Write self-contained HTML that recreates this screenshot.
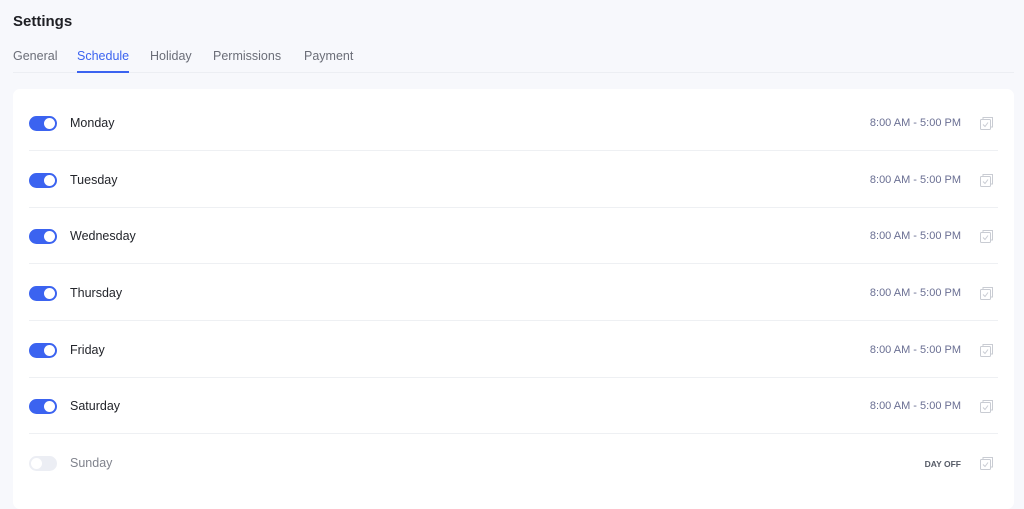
<!DOCTYPE html>
<html><head><style>
*{margin:0;padding:0;box-sizing:border-box}
body{width:1024px;height:483px;overflow:hidden;background:#f7f8fc;font-family:"Liberation Sans",sans-serif;position:relative}
h1{position:absolute;left:13px;top:13px;font-size:15px;font-weight:bold;color:#1e1f24}
.tabs{position:absolute;left:13px;top:49px;right:10px;height:24px;border-bottom:1px solid #eceef3}
.tab{position:absolute;top:0;font-size:12.5px;color:#6b6e78}
.tab.a{color:#3b63f0}
.tab.a:after{content:"";position:absolute;left:0;right:0;top:22px;height:2px;background:#3b63f0}
.card{position:absolute;left:13px;top:89px;width:1001px;height:420px;background:#fff;border-radius:7px}
.row{position:absolute;left:16px;width:969px;height:62px;border-bottom:1px solid #eef0f3}
.tg{position:absolute;left:0;top:27px;width:28px;height:15px;border-radius:8px;background:#3b63f0}
.tg:after{content:"";position:absolute;right:2px;top:2px;width:11px;height:11px;border-radius:50%;background:#fff}
.tg.off{background:#eceef4}.tg.off:after{left:2px;right:auto}
.l{position:absolute;left:41px;top:27px;font-size:12.5px;color:#23252b}
.t{position:absolute;right:37px;top:28px;font-size:11px;color:#6a6f93}
.ic{position:absolute;right:5px;top:28px}
</style></head><body>
<h1>Settings</h1>
<div class="tabs">
<span class="tab" style="left:0">General</span>
<span class="tab a" style="left:64px">Schedule</span>
<span class="tab" style="left:137px">Holiday</span>
<span class="tab" style="left:200px">Permissions</span>
<span class="tab" style="left:291px">Payment</span>
</div>
<div class="card">
<div class="row" style="top:0px"><div class="tg"></div><div class="l">Monday</div><div class="t">8:00 AM - 5:00 PM</div><svg class="ic" width="13" height="13" viewBox="0 0 13 13" fill="none" stroke="#c9ccd3"><rect x="0.5" y="2.5" width="10" height="10" rx="1"/><path d="M3 2.5V0.5h9.5V10h-2"/><path d="M3 7.5l2 2 3-4"/></svg></div>
<div class="row" style="top:57px"><div class="tg"></div><div class="l">Tuesday</div><div class="t">8:00 AM - 5:00 PM</div><svg class="ic" width="13" height="13" viewBox="0 0 13 13" fill="none" stroke="#c9ccd3"><rect x="0.5" y="2.5" width="10" height="10" rx="1"/><path d="M3 2.5V0.5h9.5V10h-2"/><path d="M3 7.5l2 2 3-4"/></svg></div>
<div class="row" style="top:113px"><div class="tg"></div><div class="l">Wednesday</div><div class="t">8:00 AM - 5:00 PM</div><svg class="ic" width="13" height="13" viewBox="0 0 13 13" fill="none" stroke="#c9ccd3"><rect x="0.5" y="2.5" width="10" height="10" rx="1"/><path d="M3 2.5V0.5h9.5V10h-2"/><path d="M3 7.5l2 2 3-4"/></svg></div>
<div class="row" style="top:170px"><div class="tg"></div><div class="l">Thursday</div><div class="t">8:00 AM - 5:00 PM</div><svg class="ic" width="13" height="13" viewBox="0 0 13 13" fill="none" stroke="#c9ccd3"><rect x="0.5" y="2.5" width="10" height="10" rx="1"/><path d="M3 2.5V0.5h9.5V10h-2"/><path d="M3 7.5l2 2 3-4"/></svg></div>
<div class="row" style="top:227px"><div class="tg"></div><div class="l">Friday</div><div class="t">8:00 AM - 5:00 PM</div><svg class="ic" width="13" height="13" viewBox="0 0 13 13" fill="none" stroke="#c9ccd3"><rect x="0.5" y="2.5" width="10" height="10" rx="1"/><path d="M3 2.5V0.5h9.5V10h-2"/><path d="M3 7.5l2 2 3-4"/></svg></div>
<div class="row" style="top:283px"><div class="tg"></div><div class="l">Saturday</div><div class="t">8:00 AM - 5:00 PM</div><svg class="ic" width="13" height="13" viewBox="0 0 13 13" fill="none" stroke="#c9ccd3"><rect x="0.5" y="2.5" width="10" height="10" rx="1"/><path d="M3 2.5V0.5h9.5V10h-2"/><path d="M3 7.5l2 2 3-4"/></svg></div>
<div class="row" style="top:340px;border:none"><div class="tg off"></div><div class="l" style="color:#80838d">Sunday</div><div class="t" style="font-size:8.5px;font-weight:bold;color:#555a66;top:30px">DAY OFF</div><svg class="ic" width="13" height="13" viewBox="0 0 13 13" fill="none" stroke="#c9ccd3"><rect x="0.5" y="2.5" width="10" height="10" rx="1"/><path d="M3 2.5V0.5h9.5V10h-2"/><path d="M3 7.5l2 2 3-4"/></svg></div>
</div>
</body></html>
